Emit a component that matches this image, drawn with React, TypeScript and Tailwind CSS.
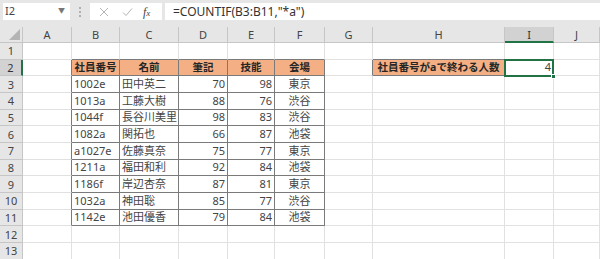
import { Fragment } from 'react'

const COLS = ['A', 'B', 'C', 'D', 'E', 'F', 'G', 'H', 'I', 'J']
const ROWS = Array.from({ length: 13 }, (_, i) => i + 1)

type Cell = { text: string; align?: 'l' | 'c' | 'r'; bold?: boolean; fill?: boolean }

const data: [string, string, string, string, string][] = [
  ['1002e', '田中英二', '70', '98', '東京'],
  ['1013a', '工藤大樹', '88', '76', '渋谷'],
  ['1044f', '長谷川美里', '98', '83', '渋谷'],
  ['1082a', '関拓也', '66', '87', '池袋'],
  ['a1027e', '佐藤真奈', '75', '77', '東京'],
  ['1211a', '福田和利', '92', '84', '池袋'],
  ['1186f', '岸辺杏奈', '87', '81', '東京'],
  ['1032a', '神田聡', '85', '77', '渋谷'],
  ['1142e', '池田優香', '79', '84', '池袋'],
]

function getCell(r: number, c: number): Cell | null {
  if (r === 2) {
    const head = ['社員番号', '名前', '筆記', '技能', '会場']
    if (c >= 1 && c <= 5) return { text: head[c - 1], align: 'c', bold: true, fill: true }
    if (c === 7) return { text: '社員番号がaで終わる人数', align: 'c', bold: true, fill: true }
    if (c === 8) return { text: '4', align: 'r' }
  }
  if (r >= 3 && r <= 11 && c >= 1 && c <= 5) {
    const v = data[r - 3][c - 1]
    const align = c <= 2 ? 'l' : c <= 4 ? 'r' : 'c'
    return { text: v, align }
  }
  return null
}

// bordered ranges: B2:F11 and H2:I2
function inTable(r: number, c: number) {
  if (r >= 2 && r <= 11 && c >= 1 && c <= 5) return true
  if (r === 2 && (c === 7 || c === 8)) return true
  return false
}

export default function App() {
  return (
    <div
      className="w-[600px] h-[259px] overflow-hidden bg-white text-[#333]"
      style={{ fontFamily: '"Noto Sans", "Noto Sans CJK JP", sans-serif' }}
    >
      {/* formula bar */}
      <div className="h-[27px] bg-[#e6e6e6] flex items-start pt-[3px] pl-[3px]">
        <div className="w-[67px] h-[17px] bg-white flex items-center justify-between px-[2px] text-[11px] text-[#444]">
          <span>I2</span>
          <span className="text-[7px] text-[#777] pr-[3px]">▼</span>
        </div>
        <div className="w-[20px] h-[17px] flex flex-col items-center justify-center gap-[2px]">
          <span className="w-[2px] h-[2px] bg-[#b0b0b0]" />
          <span className="w-[2px] h-[2px] bg-[#b0b0b0]" />
          <span className="w-[2px] h-[2px] bg-[#b0b0b0]" />
        </div>
        <div className="w-[72px] h-[17px] bg-white flex items-center">
          <svg width="10" height="10" viewBox="0 0 10 10" className="ml-[9px]">
            <path d="M1 1 L9 9 M9 1 L1 9" stroke="#b5b5b5" strokeWidth="1" fill="none" />
          </svg>
          <svg width="11" height="10" viewBox="0 0 11 10" className="ml-[13px]">
            <path d="M1 5.5 L4 8.5 L10 1.5" stroke="#b5b5b5" strokeWidth="1" fill="none" />
          </svg>
          <span
            className="ml-[10px] text-[12px] italic text-[#444] leading-none"
            style={{ fontFamily: '"Liberation Serif", serif' }}
          >
            f<span className="text-[9px]">x</span>
          </span>
        </div>
        <div className="ml-[3px] flex-1 h-[17px] bg-white flex items-center pl-[8px] text-[12px] text-[#333]">
          =COUNTIF(B3:B11,"*a")
        </div>
      </div>

      {/* sheet */}
      <div
        className="relative grid"
        style={{
          gridTemplateColumns: '23px 49px 48px 59px 49px 47px 50px 48px 132px 49px 46px',
          gridTemplateRows: '16px repeat(13, 16.67px)',
        }}
      >
        {/* corner */}
        <div className="bg-[#e6e6e6] border-r border-b border-[#c6c6c6] relative overflow-hidden">
          <svg className="absolute right-[2px] bottom-[2px]" width="11" height="11" viewBox="0 0 11 11">
            <path d="M11 0 L11 11 L0 11 Z" fill="#b4b4b4" />
          </svg>
        </div>
        {COLS.map((col, c) => (
          <div
            key={col}
            className={
              c === 8
                ? 'bg-[#d2d2d2] border-r border-[#c6c6c6] border-b-2 border-b-[#217346] text-[11px] text-[#333] flex items-center justify-center leading-none'
                : 'bg-[#e6e6e6] border-r border-b border-[#c6c6c6] text-[11px] text-[#444] flex items-center justify-center leading-none'
            }
          >
            {col}
          </div>
        ))}

        {ROWS.map(r => (
          <Fragment key={r}>
            <div
              className={
                r === 2
                  ? 'bg-[#d2d2d2] border-b border-[#c6c6c6] border-r-2 border-r-[#217346] text-[11px] text-[#333] flex items-center justify-center leading-none'
                  : 'bg-[#e6e6e6] border-r border-b border-[#c6c6c6] text-[11px] text-[#444] flex items-center justify-center leading-none'
              }
            >
              {r}
            </div>
            {COLS.map((_, c) => {
              const cell = getCell(r, c)
              const darkR = inTable(r, c) || inTable(r, c + 1)
              const darkB = inTable(r, c) || inTable(r + 1, c)
              const cls = [
                'border-r border-b flex items-end pb-[1px] px-[2px] leading-[14px] whitespace-nowrap overflow-visible',
                darkR ? 'border-r-[#7a7a7a]' : 'border-r-[#e1e1e1]',
                darkB ? 'border-b-[#7a7a7a]' : 'border-b-[#e1e1e1]',
                cell?.fill ? 'bg-[#f4b084]' : 'bg-white',
                cell?.bold ? 'font-bold text-[#262626] text-[10.5px]' : 'text-[#444] text-[11px]',
                cell?.align === 'c' ? 'justify-center' : cell?.align === 'r' ? 'justify-end' : 'justify-start',
              ].join(' ')
              return (
                <div key={c} className={cls}>
                  {cell?.text ?? ''}
                </div>
              )
            })}
          </Fragment>
        ))}

        {/* selection I2 */}
        <div className="absolute left-[504px] top-[32px] w-[50px] h-[18px] border-2 border-[#217346] pointer-events-none">
          <div className="absolute right-[-4px] bottom-[-4px] w-[5px] h-[5px] bg-[#217346] border border-white" />
        </div>
      </div>
    </div>
  )
}
